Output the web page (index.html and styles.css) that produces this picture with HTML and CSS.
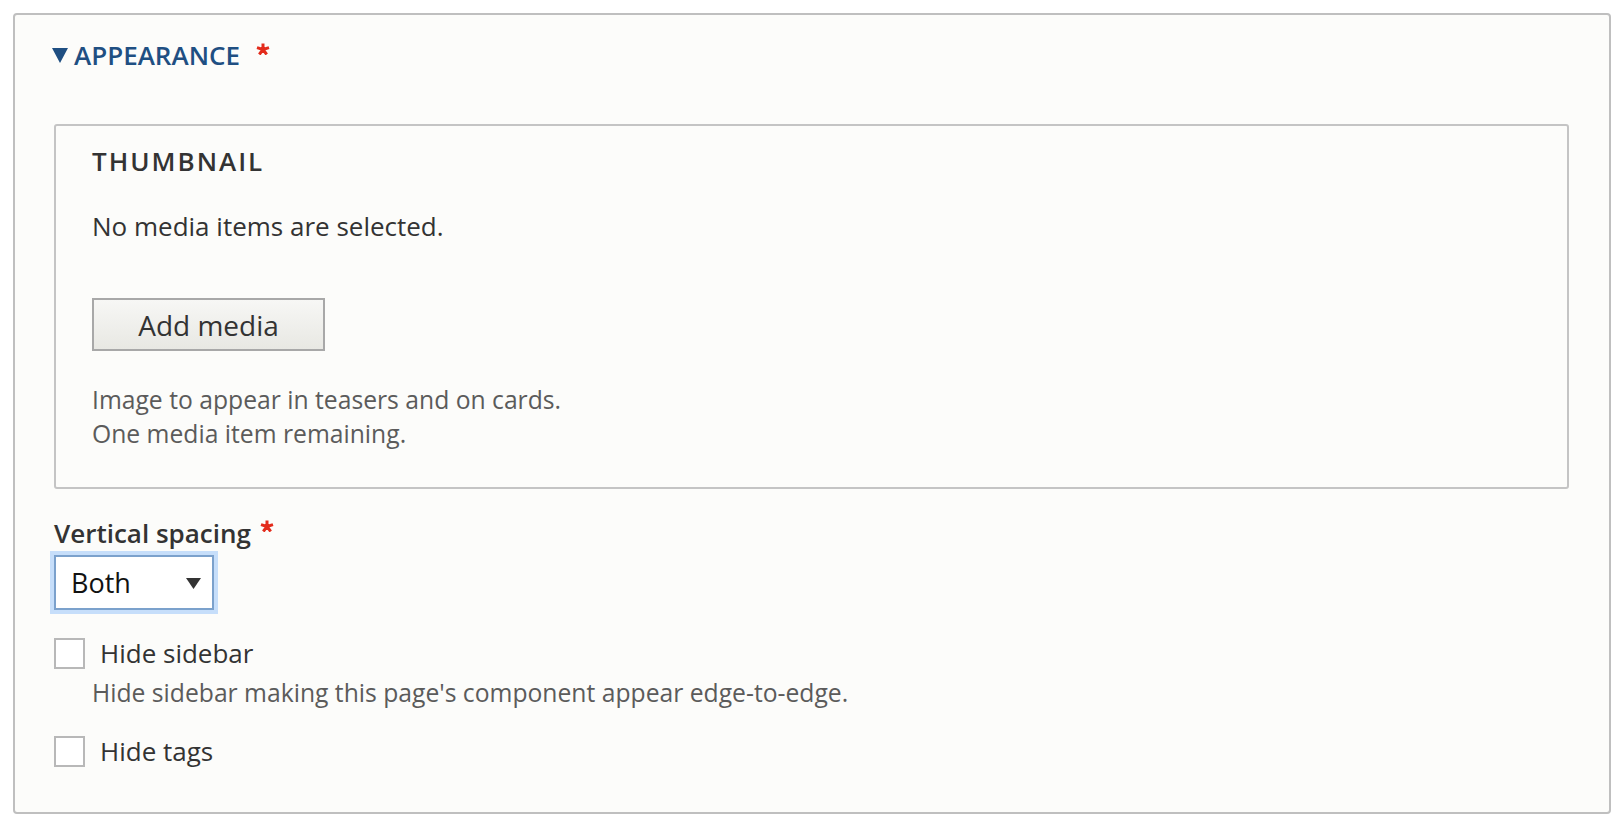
FILE: index.html
```html
<!DOCTYPE html>
<html lang="en">
<head>
<meta charset="utf-8">
<title>Appearance</title>
<link rel="stylesheet" href="styles.css">
</head>
<body>
<div class="details">
  <div class="summary">
    <svg class="caret" width="16" height="15" viewBox="0 0 16 15" aria-hidden="true"><path d="M0 0H16L8 15Z"/></svg>
    <span class="summary-text">APPEARANCE</span>
    <svg class="req req-summary" width="14" height="12" viewBox="0 0 14 12" aria-hidden="true"><path d="M7 0.5V6.5M7 6.5L1 4.6M7 6.5L13 4.6M7 6.5L3.3 11.5M7 6.5L10.7 11.5"/></svg>
  </div>
  <div class="fieldset">
    <div class="legend">THUMBNAIL</div>
    <p class="empty">No media items are selected.</p>
    <button class="button" type="button">Add media</button>
    <div class="description help">Image to appear in teasers and on cards.<br>One media item remaining.</div>
  </div>
  <div class="label">
    <span>Vertical spacing</span>
    <svg class="req req-label" width="14" height="12" viewBox="0 0 14 12" aria-hidden="true"><path d="M7 0.5V6.5M7 6.5L1 4.6M7 6.5L13 4.6M7 6.5L3.3 11.5M7 6.5L10.7 11.5"/></svg>
  </div>
  <div class="select">
    <span>Both</span>
    <svg class="select-arrow" width="15" height="11" viewBox="0 0 15 11" aria-hidden="true"><path d="M0 0H15L7.5 11Z"/></svg>
  </div>
  <div class="checkbox-row first-check">
    <span class="checkbox"></span>
    <span class="check-label">Hide sidebar</span>
  </div>
  <div class="description check-desc">Hide sidebar making this page's component appear edge-to-edge.</div>
  <div class="checkbox-row second-check">
    <span class="checkbox"></span>
    <span class="check-label">Hide tags</span>
  </div>
</div>
</body>
</html>
```

FILE: styles.css
```css
* {
  box-sizing: border-box;
}

html, body {
  background: #ffffff;
}

body {
  margin: 0;
  padding: 13px 11px 16px 13px;
  font-family: "Open Sans", "DejaVu Sans", sans-serif;
  font-size: 26px;
  color: #333333;
}

.details {
  height: 801px;
  border: 2px solid #bfbfbf;
  border-radius: 4px;
  background: #fcfcfa;
  padding: 22px 40px 43px 39px;
}

.summary {
  display: flex;
  align-items: center;
  height: 36px;
  margin-left: -2px;
  margin-bottom: 51px;
  color: #1f4f82;
}

.caret {
  fill: #1f4f82;
  margin-right: 6px;
  flex: none;
}

.summary-text {
  font-size: 26px;
  font-weight: 600;
  line-height: 36px;
}

.req {
  fill: none;
  stroke: #e32b1b;
  stroke-width: 3;
  stroke-linecap: butt;
  flex: none;
  align-self: flex-start;
}

.req-summary {
  margin-left: 16px;
  margin-top: 6px;
}

.fieldset {
  border: 2px solid #c4c4c4;
  border-radius: 3px;
  padding: 17px 36px 36px 36px;
}

.legend {
  font-weight: 600;
  line-height: 36px;
  letter-spacing: 2px;
  color: #333333;
}

.empty {
  margin: 29px 0 0;
  line-height: 36px;
}

.button {
  display: block;
  margin-top: 54px;
  width: 233px;
  height: 53px;
  padding: 0;
  border: 2px solid #a8a8a8;
  border-radius: 0;
  background: linear-gradient(to bottom, #f7f7f5, #e8e8e3);
  font-family: "Open Sans", "DejaVu Sans", sans-serif;
  font-size: 28px;
  font-weight: 500;
  color: #333333;
}

.description {
  font-size: 24.7px;
  line-height: 34px;
  color: #5b5b5b;
}

.help {
  margin-top: 32px;
}

.label {
  display: flex;
  align-items: center;
  height: 36px;
  margin-top: 26px;
  font-weight: 600;
  line-height: 36px;
}

.req-label {
  margin-left: 9px;
  margin-top: 5px;
}

.select {
  display: flex;
  align-items: center;
  justify-content: space-between;
  width: 160px;
  height: 55px;
  margin-top: 4px;
  padding: 0 11px 0 15px;
  border: 2px solid #7ba1cc;
  background: #ffffff;
  box-shadow: 0 0 0 4px #c6defa;
  font-size: 27px;
  color: #111111;
}

.select-arrow {
  fill: #333333;
  margin-top: 1px;
}

.checkbox-row {
  display: flex;
  align-items: center;
  height: 36px;
  line-height: 36px;
}

.first-check {
  margin-top: 25px;
}

.second-check {
  margin-top: 23px;
}

.checkbox {
  width: 31px;
  height: 31px;
  border: 2px solid #b8b8b8;
  background: #ffffff;
  margin-right: 15px;
  flex: none;
}

.check-label {
  color: #333333;
}

.check-desc {
  margin-top: 5px;
  padding-left: 38px;
}
```
